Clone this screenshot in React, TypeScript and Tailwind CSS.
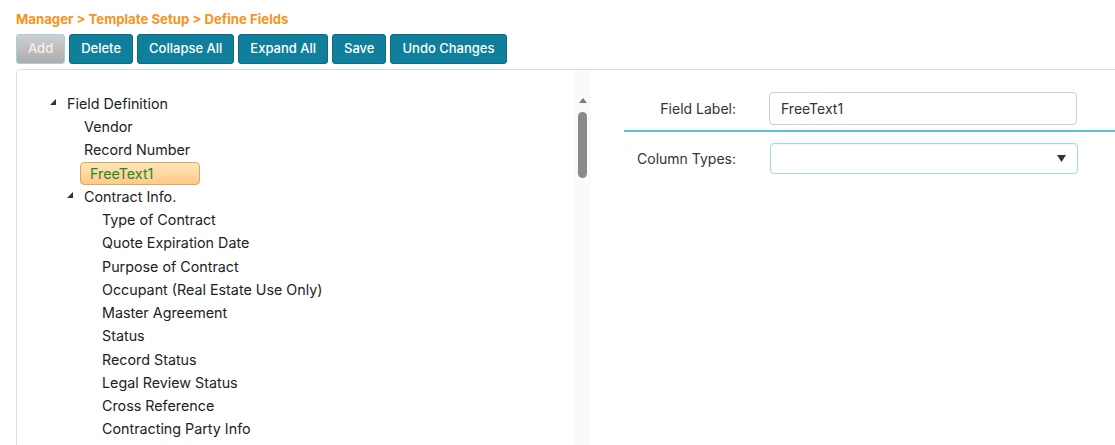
import React from "react"

type Node = { label: string; level: number; toggle?: boolean; selected?: boolean }

const nodes: Node[] = [
  { label: "Field Definition", level: 0, toggle: true },
  { label: "Vendor", level: 1 },
  { label: "Record Number", level: 1 },
  { label: "FreeText1", level: 1, selected: true },
  { label: "Contract Info.", level: 1, toggle: true },
  { label: "Type of Contract", level: 2 },
  { label: "Quote Expiration Date", level: 2 },
  { label: "Purpose of Contract", level: 2 },
  { label: "Occupant (Real Estate Use Only)", level: 2 },
  { label: "Master Agreement", level: 2 },
  { label: "Status", level: 2 },
  { label: "Record Status", level: 2 },
  { label: "Legal Review Status", level: 2 },
  { label: "Cross Reference", level: 2 },
  { label: "Contracting Party Info", level: 2 },
]

const indents = ["pl-[33px]", "pl-[50px]", "pl-[68px]"]

function Toggle() {
  return (
    <svg width="6" height="6" viewBox="0 0 6 6" className="mr-[11px] -mt-[4px]">
      <polygon points="6,0 6,6 0,6" fill="#333" />
    </svg>
  )
}

function ToolButton({ label, disabled }: { label: string; disabled?: boolean }) {
  return (
    <button
      className={
        disabled
          ? "h-[30px] px-[11px] rounded-[3px] border border-[#9fd3e3] bg-gradient-to-b from-[#cfcfcf] to-[#adadad] text-[13px] font-medium text-[#f1f1f1]"
          : "h-[30px] px-[11px] rounded-[3px] border border-[#0b6c85] bg-[#0f7f9b] text-[13px] font-medium text-white"
      }
    >
      {label}
    </button>
  )
}

export default function App() {
  return (
    <div className="w-[1115px] h-[445px] overflow-hidden bg-white pl-4 font-['Inter'] text-[#222]">
      <div className="pt-[12px] text-[13.2px] leading-[14px] font-bold text-[#f7941d]">
        Manager &gt; Template Setup &gt; Define Fields
      </div>

      <div className="mt-[8px] flex gap-1">
        <ToolButton label="Add" disabled />
        <ToolButton label="Delete" />
        <ToolButton label="Collapse All" />
        <ToolButton label="Expand All" />
        <ToolButton label="Save" />
        <ToolButton label="Undo Changes" />
      </div>

      <div className="mt-[5px] flex h-[400px] rounded-tl-[5px] border-l border-t border-[#dcdcdc]">
        <div className="flex w-[574px] shrink-0">
          <div className="flex-1 pt-[22px]">
            {nodes.map((n) => (
              <div key={n.label} className={`flex h-[23.25px] items-center text-[14.3px] ${indents[n.level]}`}>
                {n.toggle ? <Toggle /> : <span className="w-[17px]" />}
                {n.selected ? (
                  <span className="-ml-[4px] flex h-[23px] w-[120px] items-center rounded-[4px] border border-[#d9a95c] bg-gradient-to-b from-[#ffe6b8] to-[#ffc987] pl-[9px] text-[#23892a]">
                    {n.label}
                  </span>
                ) : (
                  <span>{n.label}</span>
                )}
              </div>
            ))}
          </div>
          <div className="flex w-[17px] flex-col items-center bg-[#fafafa] pt-[28px]">
            <svg width="8" height="5" viewBox="0 0 8 5">
              <polygon points="4,0 8,5 0,5" fill="#7a7a7a" />
            </svg>
            <div className="mt-[9px] h-[66px] w-[9px] rounded-full bg-[#8a8a8a]" />
          </div>
        </div>

        <div className="flex-1 pt-[22px] text-[14px]">
          <div className="flex items-center pl-[33px]">
            <div className="w-[113px] pr-[1px] text-right text-[#333]">Field Label:</div>
            <div className="ml-[32px] flex h-[33px] w-[308px] items-center rounded-[4px] border border-[#cfcfcf] pl-[11px] text-[#333]">
              FreeText1
            </div>
          </div>
          <div className="mt-[5px] ml-[33px] h-[2px] bg-[#5bc0de]" />
          <div className="mt-[11px] flex items-center pl-[33px]">
            <div className="w-[113px] pr-[1px] text-right text-[#333]">Column Types:</div>
            <div className="ml-[33px] flex h-[31px] w-[308px] items-center justify-end rounded-[4px] border border-[#a9d4e6] pr-[11px] shadow-[inset_0_1px_2px_rgba(0,0,0,0.05)]">
              <svg width="9" height="7" viewBox="0 0 9 7">
                <polygon points="0,0 9,0 4.5,7" fill="#333" />
              </svg>
            </div>
          </div>
        </div>
      </div>
    </div>
  )
}
